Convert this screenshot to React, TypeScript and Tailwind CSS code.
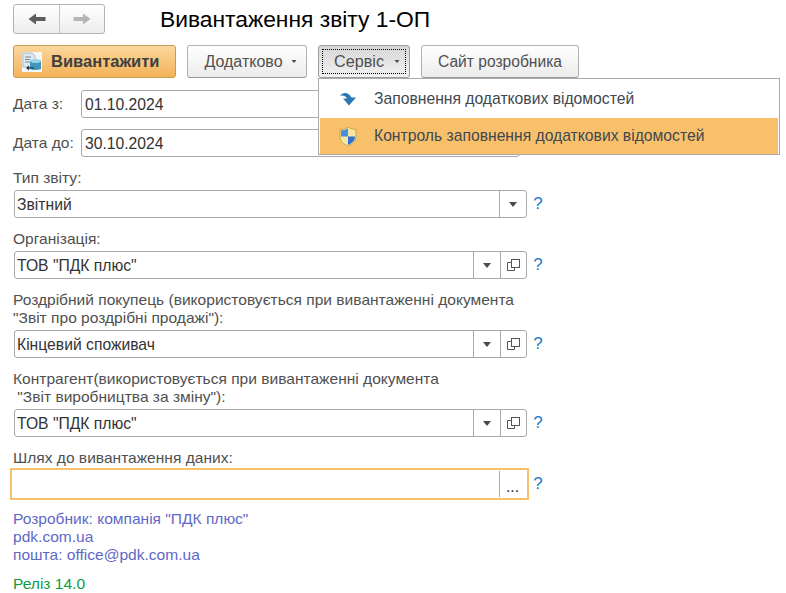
import React from 'react';

const ArrowLeft = ({ color }: { color: string }) => (
  <svg width="18" height="12" viewBox="0 0 18 12">
    <path d="M0.500 6 L8 0.500 V4 H17.500 V8 H8 V11.500 Z" fill={color} />
  </svg>
);

const ArrowRight = ({ color }: { color: string }) => (
  <svg width="18" height="12" viewBox="0 0 18 12">
    <path d="M17.500 6 L10 0.500 V4 H0.500 V8 H10 V11.500 Z" fill={color} />
  </svg>
);

const Caret = ({ small }: { small?: boolean }) => (
  <svg width={small ? 6 : 8} height={small ? 3 : 5} viewBox="0 0 8 5">
    <path d="M0 0 H8 L4 5 Z" fill="#4a4a4a" />
  </svg>
);

const OpenIcon = () => (
  <svg width="13" height="12" viewBox="0 0 13 12" fill="none" stroke="#555" strokeWidth="1">
    <path d="M4.5 3.5 H0.5 V11.5 H7.5 V8.5" />
    <rect x="4.5" y="0.5" width="8" height="8" />
  </svg>
);

const ExportIcon = () => (
  <svg width="20" height="20" viewBox="0 0 20 20">
    <rect width="20" height="20" fill="#f3f6f8" />
    <path d="M1 1 H10 L13 4 V15 H1 Z" fill="#dfe8ee" stroke="#9fb1be" strokeWidth="0.8" />
    <path d="M3 5 H9 M3 7.5 H8 M3 10 H8" stroke="#6f8c9f" strokeWidth="1" />
    <path d="M8 9 Q13 7 19 9 V17 Q13 19 8 17 Z" fill="#3f94b8" />
    <ellipse cx="13.5" cy="9" rx="5.5" ry="2" fill="#9ad3e4" />
    <path d="M5 16 H12" stroke="#26424f" strokeWidth="1.4" />
    <path d="M7 13.5 L4 16 L7 18.5 Z" fill="#26424f" />
  </svg>
);

const FillIcon = () => (
  <svg width="16" height="14" viewBox="0 0 16 14">
    <path d="M0 4 C2 0.500 8 -1 11.500 5.500 H16 L9 13.500 L3 6.500 H7 C5.500 4 3 3 0 4 Z" fill="#2c78b4" />
  </svg>
);

const ShieldIcon = () => (
  <svg width="18" height="21" viewBox="0 0 18 21">
    <path d="M9 1 C6 3 3 3.500 1 3.500 V11 C1 15.500 5 18.500 9 20 C13 18.500 17 15.500 17 11 V3.500 C15 3.500 12 3 9 1 Z" fill="#f6e6a4" stroke="#c8a93c" strokeWidth="1" />
    <path d="M9 2.200 V10.500 H2 V4.400 C4 4.300 6.500 3.800 9 2.200 Z" fill="#4a8ddc" />
    <path d="M9 10.500 H16 V11 C16 15 12.500 17.500 9 18.900 Z" fill="#2f6fd0" />
  </svg>
);

const Help = ({ className = '' }: { className?: string }) => (
  <span className={`w-[22px] pb-[2px] text-center text-[17px] leading-none text-[#1a7ac4] ${className}`}>?</span>
);

const Button = ({ label, width, caret }: { label: string; width: string; caret?: boolean }) => (
  <div
    className={`${width} h-[33px] flex items-center justify-center rounded-[3px] border border-[#b4b4b4] border-b-[#9a9a9a] bg-gradient-to-b from-white to-[#ebebeb] text-[#505050] ${caret ? 'pl-[7px]' : ''}`}
  >
    <span className={caret ? 'text-[16px]' : 'text-[15.6px]'}>{label}</span>
    {caret && <span className="ml-[8px]"><Caret small /></span>}
  </div>
);

const Field = ({
  value,
  caret,
  open,
}: {
  value?: string;
  caret?: boolean;
  open?: boolean;
}) => (
  <div className="flex items-center pl-px">
    <div className="w-[513px] h-[28px] flex items-stretch rounded-[3px] border border-[#a9a9a9] bg-white">
      <span className="flex-1 pl-[2px] leading-[28px] text-[#333]">{value}</span>
      {caret && (
        <span className="w-[27px] flex items-center justify-center border-l border-[#a9a9a9]">
          <Caret />
        </span>
      )}
      {open && (
        <span className="w-[26px] flex items-center justify-center border-l border-[#a9a9a9]">
          <OpenIcon />
        </span>
      )}
    </div>
    <Help />
  </div>
);

const Label = ({ children, className = '' }: { children: React.ReactNode; className?: string }) => (
  <div className={`text-[#505050] text-[15.55px] leading-[18px] whitespace-pre ${className}`}>{children}</div>
);

const App: React.FC = () => {
  return (
    <div className="relative w-[786px] h-[593px] overflow-hidden bg-white pl-[13px] pt-[4px] text-[15.7px] font-['Liberation_Sans',Arial,sans-serif]">
      {/* header */}
      <div className="flex items-center h-[30px]">
        <div className="w-[92px] h-[30px] flex rounded-[3px] border border-[#b4b4b4] bg-gradient-to-b from-white to-[#ededed]">
          <span className="w-[46px] flex items-center justify-center border-r border-[#c4c4c4]">
            <ArrowLeft color="#5c5c5c" />
          </span>
          <span className="flex-1 flex items-center justify-center">
            <ArrowRight color="#b5b5b5" />
          </span>
        </div>
        <h1 className="ml-[55px] text-[22.8px] leading-none text-black">Вивантаження звіту 1-ОП</h1>
      </div>

      {/* toolbar */}
      <div className="flex gap-[11px] mt-[11px]">
        <div className="w-[163px] h-[33px] flex items-center gap-[9px] pl-[8px] rounded-[3px] border border-[#c79a55] bg-gradient-to-b from-[#fad79c] to-[#f3b257] font-bold text-[#3f3f3f]">
          <ExportIcon />
          <span className="text-[16.5px]">Вивантажити</span>
        </div>
        <Button label="Додатково" width="w-[120px]" caret />
        <div className="w-[92px] h-[33px] rounded-[3px] border border-[#9c9c9c] bg-gradient-to-b from-[#d6d6d6] to-[#f2f2f2] p-[3px] text-[#505050]">
          <div className="h-full flex items-center justify-center gap-[10px] border border-dotted border-black pl-[6px]">
            <span className="text-[16.2px]">Сервіс</span>
            <Caret small />
          </div>
        </div>
        <Button label="Сайт розробника" width="w-[158px]" />
      </div>

      {/* dates */}
      <div className="mt-[12px] flex items-center">
        <Label className="w-[68px]">Дата з:</Label>
        <div className="w-[439px] h-[28px] rounded-[3px] border border-[#a9a9a9] pl-[3px] leading-[27px] text-[#333]">
          01.10.2024
        </div>
      </div>
      <div className="mt-[11px] flex items-center">
        <Label className="w-[68px]">Дата до:</Label>
        <div className="w-[439px] h-[28px] rounded-[3px] border border-[#a9a9a9] pl-[3px] leading-[27px] text-[#333]">
          30.10.2024
        </div>
      </div>

      {/* fields */}
      <Label className="mt-[12px] mb-[3px]">Тип звіту:</Label>
      <Field value="Звітний" caret />

      <Label className="mt-[12px] mb-[3px]">Організація:</Label>
      <Field value={'ТОВ "ПДК плюс"'} caret open />

      <Label className="mt-[12px] mb-[3px]">
        {'Роздрібний покупець (використовується при вивантаженні документа\n"Звіт про роздрібні продажі"):'}
      </Label>
      <Field value="Кінцевий споживач" caret open />

      <Label className="mt-[12px] mb-[3px]">
        {'Контрагент(використовується при вивантаженні документа\n "Звіт виробництва за зміну"):'}
      </Label>
      <Field value={'ТОВ "ПДК плюс"'} caret open />

      <Label className="mt-[12px] mb-[1px]">Шлях до вивантаження даних:</Label>
      <div className="flex items-center -ml-[3px]">
        <div className="w-[519px] h-[32px] flex items-stretch border-2 border-[#f9c06c] bg-white py-[1px]">
          <span className="flex-1" />
          <span className="w-[28px] border-l border-[#a9a9a9] pr-[2px] text-center leading-[32px] text-[#333]">...</span>
        </div>
        <Help className="-ml-[2px]" />
      </div>

      {/* footer */}
      <div className="mt-[10px] text-[15.55px] leading-[18px] text-[#5f68c8]">
        <div>Розробник: компанія "ПДК плюс"</div>
        <div>pdk.com.ua</div>
        <div>пошта: office@pdk.com.ua</div>
      </div>
      <div className="mt-[11px] text-[15.55px] leading-[18px] text-[#0f9a45]">Реліз 14.0</div>

      {/* dropdown menu */}
      <div className="absolute left-[318px] top-[78px] w-[462px] h-[77px] border border-[#a9a9a9] bg-white p-[1px] text-[#404850]">
        <div className="h-[38px] flex items-center">
          <span className="w-[54px] flex justify-center pl-[2px]">
            <FillIcon />
          </span>
          <span>Заповнення додаткових відомостей</span>
        </div>
        <div className="h-[36px] flex items-center bg-[#f9c06c]">
          <span className="w-[54px] flex justify-center pl-[2px]">
            <ShieldIcon />
          </span>
          <span>Контроль заповнення додаткових відомостей</span>
        </div>
      </div>
    </div>
  );
};

export default App;
